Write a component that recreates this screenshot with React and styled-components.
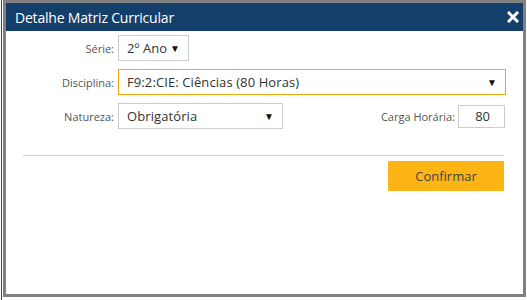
import { createGlobalStyle, styled } from "styled-components";

const GlobalStyle = createGlobalStyle`
  html, body {
    margin: 0;
    padding: 0;
    background: #fff;
  }
  body {
    font-family: "Open Sans", "Liberation Sans", sans-serif;
  }
`;

export default function App() {
  return (
    <>
      <GlobalStyle />
      <ScScreen>
        <ScEdge />
        <ScDialog>
          <ScTitleBar>
            <ScTitle>Detalhe Matriz Curricular</ScTitle>
            <ScClose aria-label="Fechar">
              <svg width="12" height="12" viewBox="0 0 12 12">
                <path d="M2 2 L10 10 M10 2 L2 10" stroke="#fff" strokeWidth="3" strokeLinecap="square" />
              </svg>
            </ScClose>
          </ScTitleBar>
          <ScBody>
            <ScRow>
              <ScLabel>Série:</ScLabel>
              <ScSelect $width="71px">
                <span>2º Ano</span>
                <ScArrow>▼</ScArrow>
              </ScSelect>
            </ScRow>
            <ScRow>
              <ScLabel>Disciplina:</ScLabel>
              <ScSelect $grow $focused>
                <span>F9:2:CIE: Ciências (80 Horas)</span>
                <ScArrow>▼</ScArrow>
              </ScSelect>
            </ScRow>
            <ScRow>
              <ScLabel>Natureza:</ScLabel>
              <ScSelect $width="165px">
                <span>Obrigatória</span>
                <ScArrow>▼</ScArrow>
              </ScSelect>
              <ScSpacer />
              <ScInlineLabel>Carga Horária:</ScInlineLabel>
              <ScInput defaultValue="80" />
            </ScRow>
            <ScDivider />
            <ScActions>
              <ScButton>Confirmar</ScButton>
            </ScActions>
          </ScBody>
        </ScDialog>
      </ScScreen>
    </>
  );
}

const ScScreen = styled.div`
  display: flex;
  width: 527px;
  height: 300px;
  background: #fff;
`;

const ScEdge = styled.div`
  width: 1px;
  height: 100%;
  margin-left: 1px;
  margin-right: 1px;
  background: #1e4a7c;
`;

const ScDialog = styled.div`
  width: 517px;
  height: 291px;
  border: 3px solid #808080;
  background: #fff;
  display: flex;
  flex-direction: column;
`;

const ScTitleBar = styled.div`
  height: 28px;
  background: #143f6b;
  display: flex;
  align-items: center;
  justify-content: space-between;
  padding: 0 4px 0 9px;
`;

const ScTitle = styled.span`
  color: #fff;
  font-size: 14px;
  letter-spacing: -0.2px;
`;

const ScClose = styled.span`
  display: flex;
  width: 12px;
  height: 12px;
`;

const ScBody = styled.div`
  display: flex;
  flex-direction: column;
  gap: 8px;
  padding: 4px 17px 0 0;
`;

const ScRow = styled.div`
  display: flex;
  align-items: center;
  height: 26px;
`;

const ScLabel = styled.span`
  width: 108px;
  margin-right: 4px;
  text-align: right;
  font-size: 11px;
  color: #555;
`;

const ScInlineLabel = styled.span`
  font-size: 11px;
  color: #555;
  margin-right: 3px;
`;

const ScSelect = styled.div`
  box-sizing: border-box;
  height: 26px;
  width: ${(p) => p.$width || "auto"};
  flex: ${(p) => (p.$grow ? 1 : "none")};
  border: 1px solid ${(p) => (p.$focused ? "#f5a40c" : "#ccc")};
  display: flex;
  align-items: center;
  justify-content: space-between;
  padding: 0 8px 0 8px;
  font-size: 13px;
  letter-spacing: 0.1px;
  color: #333;
`;

const ScArrow = styled.span`
  font-size: 10px;
  color: #111;
`;

const ScSpacer = styled.div`
  flex: 1;
`;

const ScInput = styled.input`
  box-sizing: border-box;
  width: 47px;
  height: 23px;
  border: 1px solid #ccc;
  text-align: right;
  padding: 0 14px 0 8px;
  font-family: "Open Sans", "Liberation Sans", sans-serif;
  font-size: 13px;
  color: #333;
  margin-right: 1px;
  outline: none;
`;

const ScDivider = styled.div`
  height: 1px;
  background: #ccc;
  margin: 18px 2px 0 17px;
`;

const ScActions = styled.div`
  display: flex;
  justify-content: flex-end;
  margin-top: -3px;
  padding-right: 2px;
`;

const ScButton = styled.button`
  width: 116px;
  height: 30px;
  border: none;
  background: #fdb515;
  color: #444;
  font-family: "Open Sans", "Liberation Sans", sans-serif;
  font-size: 13px;
  cursor: pointer;
`;
